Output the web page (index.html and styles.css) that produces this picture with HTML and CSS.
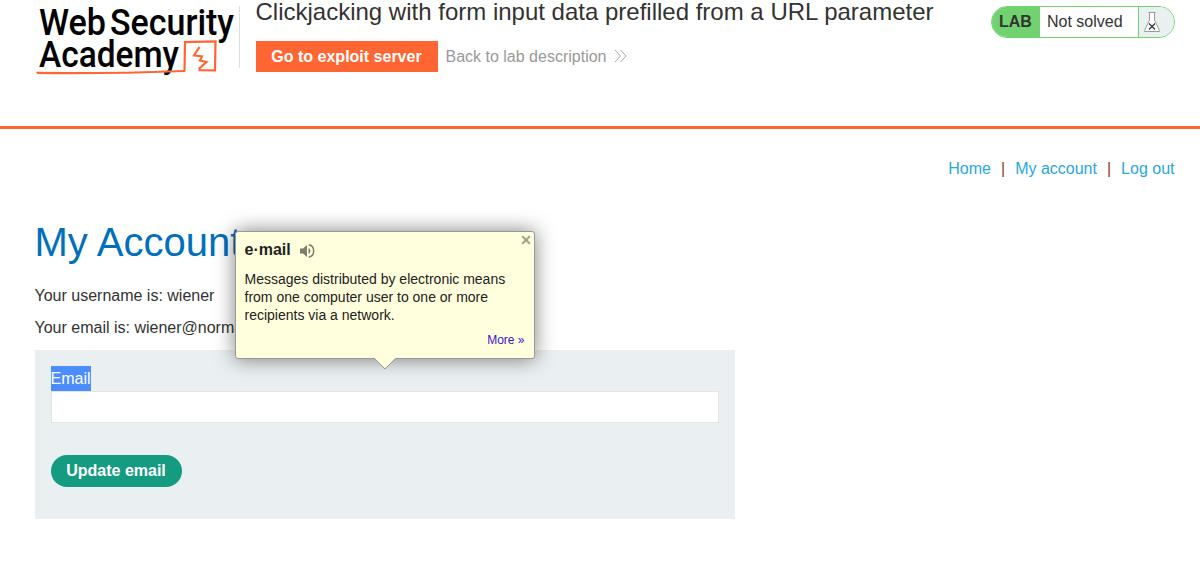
FILE: index.html
```html
<!DOCTYPE html>
<html lang="en">
<head>
    <meta charset="UTF-8">
    <meta name="viewport" content="width=device-width, initial-scale=1.0">
    <title>Clickjacking with form input data prefilled from a URL parameter</title>
    <link rel="stylesheet" href="styles.css">
</head>
<body>
    <header class="lab-header">
        <svg class="logo" width="204" height="80" viewBox="0 0 204 80">
            <g class="logo-text">
                <text x="4" y="34.5" textLength="67" lengthAdjust="spacingAndGlyphs">Web</text>
                <text x="75" y="34.5" textLength="124" lengthAdjust="spacingAndGlyphs">Security</text>
                <text x="4" y="67" textLength="140" lengthAdjust="spacingAndGlyphs">Academy</text>
            </g>
            <g fill="none" stroke="#ff6633">
                <path stroke-width="2" d="M2 73 C50 73.5 110 72.5 150 71"/>
                <path stroke-width="1" d="M1 72.3 L60 72.7"/>
                <path stroke-width="2.2" d="M149.5 71.5 L150 42.2 L180.5 41.5 L180 70.3 L164.5 70.2 L164.5 68.2 L171.5 62 L165 60.5 L167 56.5 L159 55.5 L164.5 47"/>
            </g>
        </svg>
        <div class="title-container">
            <h2>Clickjacking with form input data prefilled from a URL parameter</h2>
            <div class="actions">
                <a class="exploit-button" href="#">Go to exploit server</a>
                <a class="back-link" href="#">Back to lab description
                    <svg width="13" height="14" viewBox="0 0 13 14" fill="none" stroke="#aaa">
                        <path d="M1 1 L6.5 7 L1 13 M6.5 1 L12 7 L6.5 13"/>
                    </svg>
                </a>
            </div>
        </div>
        <div class="lab-status">
            <span class="status-label">LAB</span>
            <span class="status-text">Not solved</span>
            <span class="status-icon">
                <svg width="18" height="22" viewBox="0 0 18 22" fill="none">
                    <path fill="#fff" stroke="#999" d="M6.5 2 V9 L1.5 19.5 V20.5 H16.5 V19.5 L11.5 9 V2"/>
                    <path stroke="#999" d="M5.5 1.5 H12.5"/>
                    <path stroke="#333" stroke-width="1.3" d="M6 12.5 L12 18.5 M12 12.5 L6 18.5"/>
                </svg>
            </span>
        </div>
    </header>

    <nav class="top-links">
        <a href="#">Home</a><span>|</span>
        <a href="#">My account</a><span>|</span>
        <a href="#">Log out</a>
    </nav>

    <main>
        <h1>My Account</h1>
        <p>Your username is: wiener</p>
        <p>Your email is: wiener@normal-user.net</p>
        <form class="login-form">
            <label for="email"><span class="selected">Email</span></label>
            <input type="email" id="email" name="email">
            <button type="button">Update email</button>
        </form>
    </main>

    <div class="bubble">
        <div class="bubble-head">
            <b>e·mail</b>
            <svg width="16" height="16" viewBox="0 0 16 16">
                <path fill="#7d7d6b" d="M1 5.5 H4 L8 2 V14 L4 10.5 H1 Z"/>
                <path fill="#7d7d6b" d="M9.5 5 C12 6 12 10 9.5 11 Z"/>
                <path fill="none" stroke="#7d7d6b" stroke-width="1.5" d="M9.8 1.8 C16.3 3.2 16.3 12.8 9.8 14.2"/>
            </svg>
        </div>
        <p>Messages distributed by electronic means from one computer user to one or more recipients via a network.</p>
        <a href="#">More »</a>
        <svg class="bubble-close" width="10" height="10" viewBox="0 0 10 10">
            <path fill="none" stroke="#a2a28d" stroke-width="2" d="M1.2 1.2 L8.8 8.8 M8.8 1.2 L1.2 8.8"/>
        </svg>
        <svg class="bubble-arrow" width="22" height="12" viewBox="0 0 22 12">
            <path fill="#ffffdd" d="M0.5 0 L11 10.5 L21.5 0 Z"/>
            <path fill="none" stroke="#999" d="M0.5 0.5 L11 11 L21.5 0.5"/>
        </svg>
    </div>
</body>
</html>
```
FILE: styles.css
```css
* {
    box-sizing: border-box;
}
body {
    margin: 0;
    height: 562px;
    overflow: hidden;
    background-color: #fff;
    color: #333332;
    font-family: "Liberation Sans", Arial, sans-serif;
    font-size: 16px;
}
a {
    text-decoration: none;
}
h1, h2, p {
    margin: 0;
    font-weight: normal;
}
.lab-header {
    display: flex;
    align-items: flex-start;
    height: 129px;
    padding: 0 25px 0 35px;
    border-bottom: 3px solid #ff6633;
}
.logo {
    flex: none;
    overflow: visible;
}
.logo-text {
    font-family: Roboto, sans-serif;
    font-size: 37.5px;
    font-weight: 500;
}
.title-container {
    height: 62px;
    margin-top: 6px;
    padding-left: 16px;
    border-left: 1px solid #dededc;
}
.title-container h2 {
    margin: -8px 0 0 -0.5px;
    font-size: 24px;
    line-height: 28px;
}
.actions {
    display: flex;
    gap: 7.5px;
    margin-top: 15px;
    line-height: 31px;
}
.exploit-button {
    width: 182px;
    padding-right: 1px;
    background-color: #ff6633;
    color: #fff;
    font-weight: bold;
    text-align: center;
}
.back-link {
    display: flex;
    align-items: center;
    gap: 8px;
    color: #999;
}
.back-link svg {
    margin-bottom: 2px;
}
.lab-status {
    display: flex;
    width: 184px;
    height: 32px;
    margin: 6px 0 0 auto;
    border: 1px solid #71d36f;
    border-radius: 16px;
    overflow: hidden;
    line-height: 30px;
}
.status-label {
    width: 48px;
    padding-left: 7px;
    background-color: #71d36f;
    font-weight: bold;
}
.status-text {
    width: 98px;
    padding-left: 7px;
}
.status-icon {
    display: flex;
    flex: 1;
    align-items: center;
    padding-left: 4px;
    border-left: 1px solid #71d36f;
    background-color: #eaeff2;
}
.top-links {
    display: flex;
    justify-content: flex-end;
    margin-top: 30px;
    padding-right: 25.5px;
    line-height: 20px;
}
.top-links a {
    color: #29a7e1;
}
.top-links span {
    margin: 0 10px;
    color: #8a3b10;
}
main {
    width: 735px;
    padding: 38px 0 0 35px;
}
h1 {
    margin-bottom: 16px;
    color: #0070bd;
    font-size: 40px;
    line-height: 50px;
    text-indent: -0.5px;
}
main p {
    margin-bottom: 7px;
    line-height: 25px;
    text-indent: -0.5px;
}
.login-form {
    height: 169px;
    margin-top: 10px;
    padding: 16px;
    background-color: #eaeff2;
}
.login-form label {
    display: flex;
    line-height: 25px;
}
.selected {
    background-color: #4b8dff;
    color: #fff;
    text-indent: -0.5px;
}
.login-form input {
    display: block;
    width: 100%;
    height: 32px;
    border: 1px solid #e4e4e4;
    background-color: #fff;
}
.login-form button {
    width: 131px;
    height: 32px;
    margin-top: 32px;
    padding: 0 1px 0 0;
    border: 0;
    border-radius: 16px;
    background-color: #159b80;
    color: #fff;
    font: bold 16px "Liberation Sans", Arial, sans-serif;
}
/* dictionary popup over the page */
.bubble {
    position: absolute;
    top: 231px;
    left: 235px;
    width: 300px;
    height: 128px;
    padding: 8px 9.5px 8px 8.5px;
    border: 1px solid #999;
    border-radius: 3px;
    background-color: #ffffdd;
    box-shadow: 0 0 20px rgba(0, 0, 0, 0.5);
    color: #222;
    font-size: 14px;
    line-height: 18px;
}
.bubble-head {
    display: flex;
    align-items: center;
    gap: 8px;
    font-size: 16px;
}
.bubble-head svg {
    margin-top: 3px;
}
.bubble p {
    margin-top: 11px;
}
.bubble > a {
    display: block;
    margin-top: 7px;
    color: #3b12cf;
    font-size: 12px;
    text-align: right;
}
.bubble-close {
    position: absolute;
    top: 3px;
    right: 3px;
}
.bubble-arrow {
    position: absolute;
    top: 126px;
    left: 138px;
}
```
